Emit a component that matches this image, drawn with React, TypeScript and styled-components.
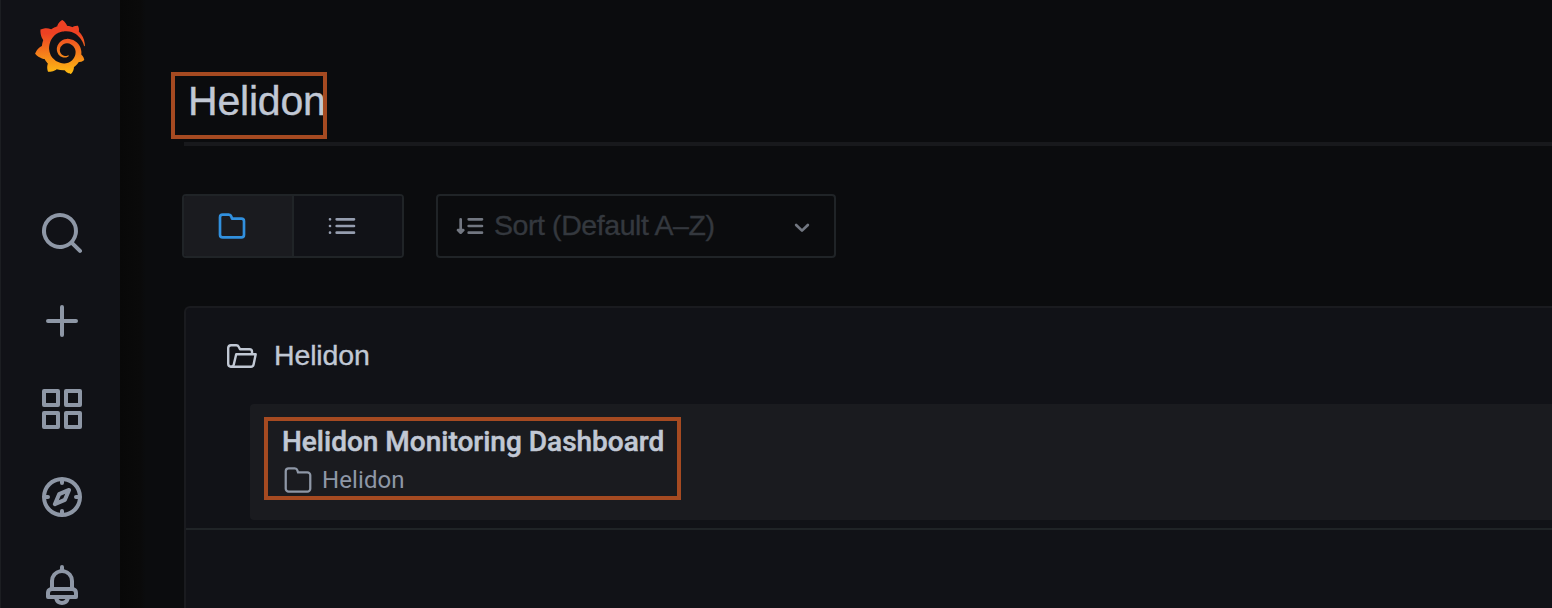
import React from 'react';
import styled, { createGlobalStyle } from 'styled-components';
import { SiGrafana } from 'react-icons/si';

const GlobalStyle = createGlobalStyle`
  * { box-sizing: border-box; }
  html, body { margin: 0; background: #0b0c0e; overflow: hidden; }
`;

const Page = styled.div`
  position: relative;
  display: flex;
  height: 608px;
  overflow: hidden;
  background: #0b0c0e;
  color: #c1c8d4;
  font-family: 'Liberation Sans', sans-serif;
`;

const Sidebar = styled.nav`
  flex: none;
  width: 120px;
  padding: 20px 0 0 1px;
  border-left: 1px solid #1c1e22;
  background: #111217;
  display: flex;
  flex-direction: column;
  align-items: center;
`;

const Logo = styled.div`
  height: 54px;
  margin: 0 0 135px -2px;
  svg { display: block; }
`;

const NavList = styled.div`
  display: flex;
  flex-direction: column;
  gap: 40px;
  padding-left: 2px;
  color: #8e97a6;
`;

const Glyph = styled.svg<{ $size: number }>`
  display: block;
  flex: none;
  width: ${(p) => p.$size}px;
  height: ${(p) => p.$size}px;
  fill: currentColor;
`;

const Main = styled.main`
  flex: 1;
  min-width: 0;
  padding: 72px 0 0 62px;
  background: linear-gradient(90deg, #080808 0, #0a0a0a 20px, #0b0c0e 26px);
`;

const SearchField = styled.div`
  height: 74px;
  margin-left: 2px;
  padding-left: 4px;
  border-bottom: 4px solid #18191c;
  font-size: 41px;
  line-height: 59px;
  letter-spacing: -0.2px;
  -webkit-text-stroke: 0.4px currentColor;
`;

const Toolbar = styled.div`
  display: flex;
  gap: 32px;
  margin-top: 48px;
`;

const Toggle = styled.div`
  display: flex;
  width: 222px;
  height: 64px;
  border: 2px solid #202427;
  border-radius: 4px;
  overflow: hidden;
`;

const ToggleItem = styled.div<{ $active?: boolean }>`
  flex: none;
  width: ${(p) => (p.$active ? '108px' : '110px')};
  display: flex;
  align-items: center;
  justify-content: center;
  padding-right: 12px;
  background: ${(p) => (p.$active ? '#1a1b1f' : '#111217')};
  color: ${(p) => (p.$active ? '#3190de' : '#959daf')};
  & + & { border-left: 2px solid #202427; }
`;

const Select = styled.div`
  display: flex;
  align-items: center;
  width: 400px;
  height: 64px;
  padding: 0 16px;
  border: 2px solid #202427;
  border-radius: 4px;
  color: #727781;
`;

const Placeholder = styled.span`
  flex: 1;
  padding: 0 0 3px 8px;
  color: #34383e;
  font-size: 28.5px;
  line-height: 36px;
  letter-spacing: -0.42px;
  -webkit-text-stroke: 0.35px currentColor;
`;

const Panel = styled.section`
  height: 340px;
  margin: 48px 0 0 2px;
  border: 2px solid #1a1b1f;
  border-right: 0;
  border-radius: 6px 0 0 0;
  background: #111217;
`;

const SectionHeader = styled.header`
  display: flex;
  align-items: center;
  gap: 17px;
  height: 96px;
  padding-left: 41px;
  font-size: 28.5px;
`;

const SectionTitle = styled.span`
  padding-bottom: 3px;
  line-height: 36px;
  letter-spacing: -0.15px;
  -webkit-text-stroke: 0.35px currentColor;
`;

const SectionBody = styled.div`
  padding: 0 0 8px 64px;
  border-bottom: 2px solid #202427;
`;

const Result = styled.article`
  height: 116px;
  padding: 20px 0 0 32px;
  border-radius: 4px 0 0 4px;
  background: #1a1b1f;
  font-family: Roboto, sans-serif;
`;

const ResultTitle = styled.div`
  font-size: 28px;
  font-weight: 500;
  line-height: 36px;
  -webkit-text-stroke: 0.5px currentColor;
`;

const ResultFolder = styled.div`
  display: flex;
  align-items: center;
  gap: 8px;
  height: 40px;
  color: #8e97a6;
  font-size: 24px;
  line-height: 32px;
  letter-spacing: 0.1px;
`;

const Highlight = styled.div<{ $x: number; $y: number; $w: number; $h: number }>`
  position: absolute;
  left: ${(p) => p.$x}px;
  top: ${(p) => p.$y}px;
  width: ${(p) => p.$w}px;
  height: ${(p) => p.$h}px;
  border: 4px solid #a54a21;
`;

const NAV_ICONS = [
  'M21.71,20.29,18,16.61A9,9,0,1,0,16.61,18l3.68,3.68a1,1,0,0,0,1.42,0A1,1,0,0,0,21.71,20.29ZM11,18a7,7,0,1,1,7-7A7,7,0,0,1,11,18Z',
  'M19,11H13V5a1,1,0,0,0-2,0v6H5a1,1,0,0,0,0,2h6v6a1,1,0,0,0,2,0V13h6a1,1,0,0,0,0-2Z',
  'M10,13H3a1,1,0,0,0-1,1v7a1,1,0,0,0,1,1h7a1,1,0,0,0,1-1V14A1,1,0,0,0,10,13ZM9,20H4V15H9ZM21,2H14a1,1,0,0,0-1,1v7a1,1,0,0,0,1,1h7a1,1,0,0,0,1-1V3A1,1,0,0,0,21,2ZM20,9H15V4h5Zm1,4H14a1,1,0,0,0-1,1v7a1,1,0,0,0,1,1h7a1,1,0,0,0,1-1V14A1,1,0,0,0,21,13Zm-1,7H15V15h5ZM10,2H3A1,1,0,0,0,2,3v7a1,1,0,0,0,1,1h7a1,1,0,0,0,1-1V3A1,1,0,0,0,10,2ZM9,9H4V4H9Z',
  'M12,2A10,10,0,1,0,22,12,10,10,0,0,0,12,2Zm1,17.93V19a1,1,0,0,0-2,0v.93A8,8,0,0,1,4.07,13H5a1,1,0,0,0,0-2H4.07A8,8,0,0,1,11,4.07V5a1,1,0,0,0,2,0V4.07A8,8,0,0,1,19.93,11H19a1,1,0,0,0,0,2h.93A8,8,0,0,1,13,19.93ZM15.14,7.55l-5,2.12a1,1,0,0,0-.52.52l-2.12,5a1,1,0,0,0,.21,1.1,1,1,0,0,0,.7.3.93.93,0,0,0,.4-.09l5-2.12a1,1,0,0,0,.52-.52l2.12-5a1,1,0,0,0-1.31-1.31Zm-2.49,5.1-2.28,1,1-2.28,2.28-1Z',
  'M18,13.18V10a6,6,0,0,0-5-5.91V3a1,1,0,0,0-2,0V4.09A6,6,0,0,0,6,10v3.18A3,3,0,0,0,4,16v2a1,1,0,0,0,1,1H8.14a4,4,0,0,0,7.72,0H19a1,1,0,0,0,1-1V16A3,3,0,0,0,18,13.18ZM8,10a4,4,0,0,1,8,0v3H8Zm4,10a2,2,0,0,1-1.72-1h3.44A2,2,0,0,1,12,20Zm6-3H6V16a1,1,0,0,1,1-1H17a1,1,0,0,1,1,1Z',
];

const FOLDER =
  'M19,5.5H12.72l-.32-1a3,3,0,0,0-2.84-2H5a3,3,0,0,0-3,3v13a3,3,0,0,0,3,3H19a3,3,0,0,0,3-3V8.5A3,3,0,0,0,19,5.5Zm1,13a1,1,0,0,1-1,1H5a1,1,0,0,1-1-1V5.5a1,1,0,0,1,1-1H9.56a1,1,0,0,1,.95.68l.54,1.64A1,1,0,0,0,12,7.5h7a1,1,0,0,1,1,1Z';

const Icon = ({ d, size }: { d: string; size: number }) => (
  <Glyph $size={size} viewBox="0 0 24 24">
    <path d={d} />
  </Glyph>
);

const OutlineFolder = () => (
  <Glyph $size={32} viewBox="0 0 24 24">
    <path
      d="M5 3.3H9.56A2 2 0 0 1 11.5 4.7L12 6.3H19A2.2 2.2 0 0 1 21.2 8.5V18.5A2.2 2.2 0 0 1 19 20.7H5A2.2 2.2 0 0 1 2.8 18.5V5.5A2.2 2.2 0 0 1 5 3.3Z"
      fill="none"
      stroke="currentColor"
      strokeWidth="1.7"
    />
  </Glyph>
);

const ListIcon = () => (
  <Glyph $size={32} viewBox="0 0 24 24">
    <path d="M3 7h.01M3 12h.01M3 17h.01M8 7h13M8 12h13M8 17h13" stroke="currentColor" strokeWidth="2" strokeLinecap="round" />
  </Glyph>
);

const SortIcon = () => (
  <Glyph $size={32} viewBox="0 0 24 24">
    <path d="M11 7h10M11 12h10M11 17h10M5 7v9" stroke="currentColor" strokeWidth="2" strokeLinecap="round" />
    <path d="M3 15.1 5 17l2-1.9z" stroke="currentColor" strokeWidth="2" strokeLinejoin="round" />
  </Glyph>
);

const ChevronIcon = () => (
  <Glyph $size={32} viewBox="0 0 24 24">
    <path d="M7.6 11.2 12 15.5 16.4 11.2" fill="none" stroke="currentColor" strokeWidth="2" strokeLinecap="round" strokeLinejoin="round" />
  </Glyph>
);

const OpenFolderIcon = () => (
  <svg width="30" height="24" viewBox="0 0 30 24" fill="none" stroke="currentColor" strokeWidth="2.4" strokeLinejoin="round">
    <path d="M7 22.7H4A2.9 2.9 0 0 1 1.2 19.8V3.9A2.9 2.9 0 0 1 4 1.2H9.3Q11 1.2 11.7 2.7L13 5.2H22.5Q25 5.2 25 7.5V10.3" />
    <path d="M9.2 10.3H28.7L26.6 20.5Q26.1 22.7 24 22.7H4.5Q6.3 22.5 6.8 20.5Z" />
  </svg>
);

export default function App() {
  return (
    <Page>
      <GlobalStyle />
      <Sidebar>
        <Logo>
          <svg width="0" height="0">
            <defs>
              <linearGradient id="flame" x1="0" y1="0" x2="0" y2="1">
                <stop offset="0.25" stopColor="#ee4123" />
                <stop offset="1" stopColor="#fdbc12" />
              </linearGradient>
            </defs>
          </svg>
          <SiGrafana size={54} fill="url(#flame)" />
        </Logo>
        <NavList>
          {NAV_ICONS.map((d) => (
            <Icon key={d} d={d} size={48} />
          ))}
        </NavList>
      </Sidebar>
      <Main>
        <SearchField>Helidon</SearchField>
        <Toolbar>
          <Toggle>
            <ToggleItem $active>
              <Icon d={FOLDER} size={32} />
            </ToggleItem>
            <ToggleItem>
              <ListIcon />
            </ToggleItem>
          </Toggle>
          <Select>
            <SortIcon />
            <Placeholder>Sort (Default A–Z)</Placeholder>
            <ChevronIcon />
          </Select>
        </Toolbar>
        <Panel>
          <SectionHeader>
            <OpenFolderIcon />
            <SectionTitle>Helidon</SectionTitle>
          </SectionHeader>
          <SectionBody>
            <Result>
              <ResultTitle>Helidon Monitoring Dashboard</ResultTitle>
              <ResultFolder>
                <OutlineFolder />
                <span>Helidon</span>
              </ResultFolder>
            </Result>
          </SectionBody>
        </Panel>
      </Main>
      <Highlight $x={171} $y={72} $w={156} $h={67} />
      <Highlight $x={264} $y={417} $w={417} $h={83} />
    </Page>
  );
}
